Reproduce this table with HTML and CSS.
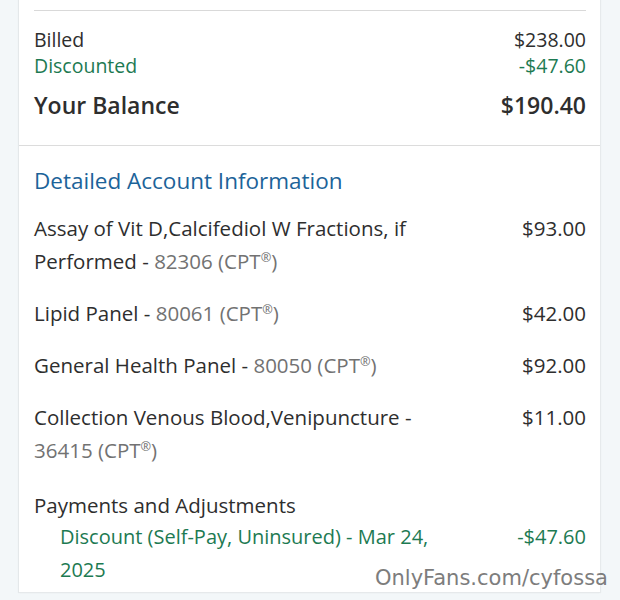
FILE: index.html
```html
<!DOCTYPE html>
<html lang="en">
<head>
<meta charset="utf-8">
<title>Account</title>
<link rel="stylesheet" href="styles.css">
</head>
<body>
<div class="card">
  <section class="summary">
    <div class="rule"></div>
    <div class="row first"><span>Billed</span><span>$238.00</span></div>
    <div class="row green"><span>Discounted</span><span>-$47.60</span></div>
    <div class="row total"><span>Your Balance</span><span>$190.40</span></div>
  </section>
  <section class="details">
    <h2 class="heading">Detailed Account Information</h2>
    <div class="item"><div class="desc"><span>Assay of Vit D,Calcifediol W Fractions, if</span> <span>Performed -</span> <span class="code">82306 (CPT<span class="reg">®</span>)</span></div><div class="amt">$93.00</div></div>
    <div class="item"><div class="desc">Lipid Panel - <span class="code">80061 (CPT<span class="reg">®</span>)</span></div><div class="amt">$42.00</div></div>
    <div class="item"><div class="desc">General Health Panel - <span class="code">80050 (CPT<span class="reg">®</span>)</span></div><div class="amt">$92.00</div></div>
    <div class="item"><div class="desc"><span>Collection Venous Blood,Venipuncture -</span> <span class="code">36415 (CPT<span class="reg">®</span>)</span></div><div class="amt">$11.00</div></div>
    <div class="payments">Payments and Adjustments</div>
    <div class="adj"><div class="desc"><span>Discount (Self-Pay, Uninsured) - Mar 24,</span> <span>2025</span></div><div class="amt">-$47.60</div></div>
  </section>
</div>
<div class="watermark">OnlyFans.com/cyfossa</div>
</body>
</html>
```
FILE: styles.css
```css
html, body {
  margin: 0;
  padding: 0;
}
body {
  background: #f3f7f9;
  width: 620px;
  height: 600px;
  overflow: hidden;
  position: relative;
  font-family: "Open Sans", "Noto Sans", sans-serif;
  color: #2e2e2e;
}
.card {
  margin-left: 19px;
  width: 581px;
  height: 593px;
  background: #fff;
  box-shadow: -1px 0 1px rgba(0,0,0,0.06), 1px 0 1px rgba(0,0,0,0.05);
  border-bottom: 1px solid #e6e9eb;
  box-sizing: border-box;
}
.summary {
  padding: 10px 14px 25px 15px;
  border-bottom: 1px solid #dcdcdc;
}
.rule {
  height: 1px;
  background: #d9d9d9;
}
.row {
  display: flex;
  justify-content: space-between;
  font-size: 19.5px;
  line-height: 26px;
}
.row.first {
  margin-top: 16px;
}
.green {
  color: #1d7a52;
}
.row.total {
  margin-top: 11px;
  font-size: 23px;
  line-height: 30px;
  font-weight: 600;
}
.details {
  padding: 20px 14px 0 15px;
}
.heading {
  margin: 0 0 16px;
  font-size: 22.5px;
  line-height: 30px;
  font-weight: 400;
  color: #1c6399;
}
.item, .adj {
  display: flex;
  justify-content: space-between;
  align-items: flex-start;
  font-size: 20.5px;
  line-height: 33px;
  margin-bottom: 19px;
}
.desc {
  width: 400px;
}
.amt {
  text-align: right;
}
.code {
  color: #727272;
}
.reg {
  font-size: 0.62em;
  line-height: 0;
  position: relative;
  top: -0.55em;
}
.payments {
  margin-top: 23px;
  font-size: 20.5px;
  line-height: 30px;
}
.adj {
  color: #1d7a52;
  padding-left: 26px;
  margin: 0;
  font-size: 20px;
}
.adj .desc {
  width: 390px;
}
.watermark {
  position: absolute;
  left: 375px;
  top: 564px;
  font-family: "DejaVu Sans", sans-serif;
  font-size: 21px;
  line-height: 28px;
  color: #7d7d7d;
  text-shadow: 0 0 2px rgba(255,255,255,0.6);
}
```
